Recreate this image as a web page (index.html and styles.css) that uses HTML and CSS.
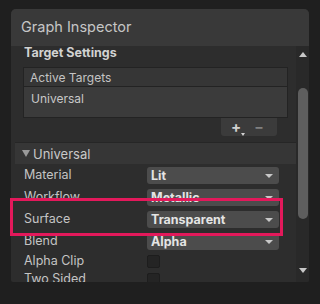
FILE: index.html
```html
<!DOCTYPE html>
<html lang="en">
<head>
    <meta charset="UTF-8">
    <title>Graph Inspector</title>
    <link rel="stylesheet" href="styles.css">
</head>
<body>
    <div class="panel">
        <div class="panel-header">Graph Inspector</div>
        <div class="panel-body">
            <div class="content">
                <div class="section-title">Target Settings</div>

                <div class="target-list">
                    <div class="list-header">Active Targets</div>
                    <div class="list-item">Universal</div>
                </div>
                <div class="list-footer">
                    <span class="btn-add">+<i class="caret-mini"></i></span>
                    <span class="btn-remove">&minus;</span>
                </div>

                <div class="foldout">
                    <span class="fold-arrow"></span>Universal
                </div>

                <div class="prop">
                    <span class="prop-label">Material</span>
                    <div class="dropdown">Lit<span class="dd-arrow"></span></div>
                </div>
                <div class="prop">
                    <span class="prop-label">Workflow</span>
                    <div class="dropdown">Metallic<span class="dd-arrow"></span></div>
                </div>
                <div class="prop">
                    <span class="prop-label">Surface</span>
                    <div class="dropdown">Transparent<span class="dd-arrow"></span></div>
                </div>
                <div class="prop">
                    <span class="prop-label">Blend</span>
                    <div class="dropdown">Alpha<span class="dd-arrow"></span></div>
                </div>
                <div class="prop toggle-row">
                    <span class="prop-label">Alpha Clip</span>
                    <div class="toggle"></div>
                </div>
                <div class="prop toggle-row">
                    <span class="prop-label">Two Sided</span>
                    <div class="toggle"></div>
                </div>
            </div>
            <div class="scrollbar">
                <span class="arrow-up"></span>
                <div class="thumb"></div>
                <span class="arrow-down"></span>
            </div>
        </div>
    </div>
    <div class="highlight"></div>
</body>
</html>
```

FILE: styles.css
```css
* {
    margin: 0;
    padding: 0;
    box-sizing: border-box;
}

body {
    width: 320px;
    height: 304px;
    overflow: hidden;
    position: relative;
    background: #1f1f1f;
    font-family: Inter, "Noto Sans", sans-serif;
    font-size: 12px;
    color: #c4c4c4;
}

.panel {
    margin: 9px 0 0 11px;
    width: 298px;
    height: 273px;
    border-radius: 5px 5px 2px 2px;
    overflow: hidden;
    background: #2d2d2d;
    display: flex;
    flex-direction: column;
}

.panel-header {
    height: 37px;
    flex: none;
    background: #393939;
    padding-left: 10px;
    line-height: 36px;
    font-size: 14.5px;
    color: #c6c6c6;
}

.panel-body {
    flex: 1;
    display: flex;
    min-height: 0;
}

.content {
    flex: 1;
    overflow: hidden;
}

.section-title {
    height: 21px;
    padding-left: 13px;
    line-height: 13px;
    font-weight: bold;
    font-size: 12.5px;
    color: #d2d2d2;
}

.target-list {
    margin-left: 12px;
    width: 265px;
    border: 1px solid #232323;
    background: #3b3b3b;
}

.list-header {
    height: 19px;
    line-height: 19px;
    padding-left: 6px;
    background: #363636;
    border-bottom: 1px solid #232323;
    color: #c4c4c4;
}

.list-item {
    height: 30px;
    padding: 5px 0 0 7px;
    line-height: 14px;
    color: #c8c8c8;
}

.list-footer {
    margin-left: 210px;
    width: 56px;
    height: 18px;
    background: #3b3b3b;
    border-radius: 0 0 3px 3px;
    display: flex;
    align-items: center;
    gap: 13px;
    padding-left: 10px;
}

.btn-add {
    position: relative;
    font-size: 15px;
    font-weight: bold;
    color: #d0d0d0;
    line-height: 14px;
}

.caret-mini {
    position: absolute;
    right: -4px;
    bottom: -2px;
    border-left: 2.5px solid transparent;
    border-right: 2.5px solid transparent;
    border-top: 3px solid #d0d0d0;
}

.btn-remove {
    font-size: 14px;
    font-weight: bold;
    color: #808080;
    line-height: 14px;
}

.foldout {
    margin: 6px 0 0 4px;
    height: 22px;
    background: #363636;
    border-top: 1px solid #262626;
    display: flex;
    align-items: center;
    padding-left: 7px;
    font-size: 13px;
    color: #c8c8c8;
}

.fold-arrow {
    width: 0;
    height: 0;
    border-left: 4px solid transparent;
    border-right: 4px solid transparent;
    border-top: 7px solid #9a9a9a;
    margin-right: 3px;
}

.prop {
    height: 22px;
    display: flex;
    align-items: center;
    padding-left: 13px;
}

.prop-label {
    width: 123px;
    margin-top: -2px;
    font-size: 12.5px;
    color: #c4c4c4;
}

.dropdown {
    position: relative;
    width: 132px;
    height: 17px;
    background: #4c4c4c;
    border-radius: 3px;
    padding-left: 4px;
    line-height: 17px;
    font-weight: bold;
    font-size: 12.5px;
    color: #e4e4e4;
}

.dd-arrow {
    position: absolute;
    right: 6px;
    top: 7px;
    border-left: 4px solid transparent;
    border-right: 4px solid transparent;
    border-top: 4px solid #c8c8c8;
}

.toggle-row {
    height: 18px;
}

.toggle {
    width: 13px;
    height: 13px;
    background: #242424;
    border: 1px solid #1d1d1d;
    border-radius: 2px;
}

.scrollbar {
    width: 13px;
    flex: none;
    background: #292929;
    display: flex;
    flex-direction: column;
    align-items: center;
    padding: 6px 1px 9px 1px;
}

.arrow-up {
    border-left: 4px solid transparent;
    border-right: 4px solid transparent;
    border-bottom: 5px solid #c8c8c8;
}

.thumb {
    width: 10px;
    height: 131px;
    margin: 31px 0 0 1px;
    background: #5e5e5e;
    border-radius: 5px;
}

.arrow-down {
    margin-top: auto;
    border-left: 4px solid transparent;
    border-right: 4px solid transparent;
    border-top: 5px solid #c8c8c8;
}

.highlight {
    position: absolute;
    left: 10px;
    top: 198px;
    width: 273px;
    height: 38px;
    border: 3px solid #e3195b;
}
```
